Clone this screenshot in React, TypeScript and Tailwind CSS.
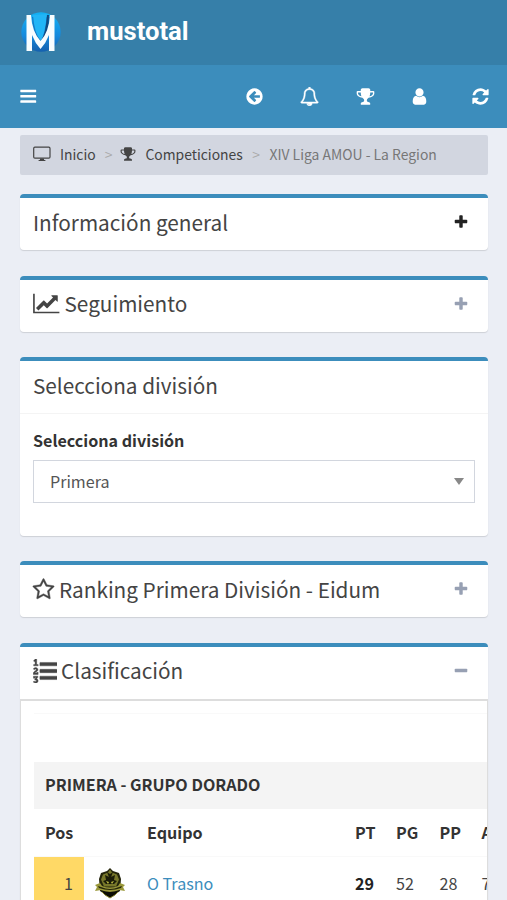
import { useState } from 'react';
import type { ReactNode } from 'react';

const icons = {
  bars: 'M1664 1344v128q0 26-19 45t-45 19h-1408q-26 0-45-19t-19-45v-128q0-26 19-45t45-19h1408q26 0 45 19t19 45zm0-512v128q0 26-19 45t-45 19h-1408q-26 0-45-19t-19-45v-128q0-26 19-45t45-19h1408q26 0 45 19t19 45zm0-512v128q0 26-19 45t-45 19h-1408q-26 0-45-19t-19-45v-128q0-26 19-45t45-19h1408q26 0 45 19t19 45z',
  back: 'M1408 960v-128q0-26-19-45t-45-19h-502l189-189q19-19 19-45t-19-45l-91-91q-18-18-45-18t-45 18l-362 362-91 91q-18 18-18 45t18 45l91 91 362 362q18 18 45 18t45-18l91-91q18-18 18-45t-18-45l-189-189h502q26 0 45-19t19-45zm256-64q0 209-103 385.5t-279.5 279.5-385.5 103-385.5-103-279.5-279.5-103-385.5 103-385.5 279.5-279.5 385.5-103 385.5 103 279.5 279.5 103 385.5z',
  bell: 'M912 1696q0-16-16-16-59 0-101.5-42.5t-42.5-101.5q0-16-16-16t-16 16q0 73 51.5 124.5t124.5 51.5q16 0 16-16zm-666-288h1300q-266-300-266-832 0-51-24-105t-69-103-121.5-80.5-169.5-31.5-169.5 31.5-121.5 80.5-69 103-24 105q0 532-266 832zm1482 0q0 52-38 90t-90 38h-448q0 106-75 181t-181 75-181-75-75-181h-448q-52 0-90-38t-38-90q50-42 91-88t85-119.5 74.5-158.5 50-206 19.5-260q0-152 117-282.5t307-158.5q-8-19-8-39 0-40 28-68t68-28 68 28 28 68q0 20-8 39 190 28 307 158.5t117 282.5q0 139 19.5 260t50 206 74.5 158.5 85 119.5 91 88z',
  trophy: 'M522 883q-74-162-74-371h-256v96q0 78 94.5 162t235.5 113zm1078-275v-96h-256q0 209-74 371 141-29 235.5-113t94.5-162zm128-128v128q0 71-41.5 143t-112 130-173 97.5-215.5 44.5q-42 54-95 95-38 34-52.5 72.5t-14.5 89.5q0 54 30.5 91t97.5 37q75 0 133.5 45.5t58.5 114.5v64q0 14-9 23t-23 9h-832q-14 0-23-9t-9-23v-64q0-69 58.5-114.5t133.5-45.5q67 0 97.5-37t30.5-91q0-51-14.5-89.5t-52.5-72.5q-53-41-95-95-113-5-215.5-44.5t-173-97.5-112-130-41.5-143v-128q0-40 28-68t68-28h288v-96q0-66 47-113t113-47h576q66 0 113 47t47 113v96h288q40 0 68 28t28 68z',
  user: 'M1536 1399q0 109-62.5 187t-150.5 78h-854q-88 0-150.5-78t-62.5-187q0-85 8.5-160.5t31.5-152 58.5-131 94-89 134.5-34.5q131 128 313 128t313-128q76 0 134.5 34.5t94 89 58.5 131 31.5 152 8.5 160.5zm-256-887q0 159-112.5 271.5t-271.5 112.5-271.5-112.5-112.5-271.5 112.5-271.5 271.5-112.5 271.5 112.5 112.5 271.5z',
  refresh: 'M1639 1056q0 5-1 7-64 268-268 434.5t-478 166.5q-146 0-282.5-55t-243.5-157l-129 129q-19 19-45 19t-45-19-19-45v-448q0-26 19-45t45-19h448q26 0 45 19t19 45-19 45l-137 137q71 66 161 102t187 36q134 0 250-65t186-179q11-17 53-117 8-23 30-23h192q13 0 22.5 9.5t9.5 22.5zm25-800v448q0 26-19 45t-45 19h-448q-26 0-45-19t-19-45 19-45l138-138q-148-137-349-137-134 0-250 65t-186 179q-11 17-53 117-8 23-30 23h-199q-13 0-22.5-9.5t-9.5-22.5v-7q65-268 270-434.5t480-166.5q146 0 284 55.5t245 156.5l130-129q19-19 45-19t45 19 19 45z',
  chart: 'M2048 1536v128h-2048v-1536h128v1408h1920zm-128-1248v435q0 21-19.5 29.5t-35.5-7.5l-121-121-633 633q-10 10-23 10t-23-10l-233-233-416 416-192-192 585-585q10-10 23-10t23 10l233 233 464-464-121-121q-16-16-7.5-35.5t29.5-19.5h435q14 0 23 9t9 23z',
  star: 'M1201 1004l306-297-422-62-189-382-189 382-422 62 306 297-73 421 378-199 377 199zm527-357q0 22-26 48l-363 354 86 500q1 7 1 20 0 50-41 50-19 0-40-12l-449-236-449 236q-22 12-40 12-21 0-31.5-14.5t-10.5-35.5q0-6 2-20l86-500-364-354q-25-27-25-48 0-37 56-46l502-73 225-455q19-41 49-41t49 41l225 455 502 73q56 9 56 46z',
  list: 'M381 1620q0 80-54.5 126t-135.5 46q-106 0-172-66l57-88q49 45 106 45 29 0 50.5-14.5t21.5-42.5q0-64-105-56l-26-56q8-10 32.5-43.5t42.5-54 37-38.5v-1q-16 0-48.5 1t-48.5 1v53h-106v-152h333v88l-95 115q51 12 81 49t30 88zm2-627v159h-362q-6-36-6-54 0-51 23.5-93t56.5-68 66-47.5 56.5-43.5 23.5-45q0-25-14.5-38.5t-39.5-13.5q-46 0-81 58l-85-59q24-51 71.5-79.5t105.5-28.5q73 0 123 41.5t50 112.5q0 50-34 91.5t-75 64.5-75.5 50.5-35.5 52.5h127v-60h105zm1409 319v192q0 13-9.5 22.5t-22.5 9.5h-1216q-13 0-22.5-9.5t-9.5-22.5v-192q0-14 9-23t23-9h1216q13 0 22.5 9.5t9.5 22.5zm-1408-899v99h-335v-99h107q0-41 .5-121.5t.5-121.5v-12h-2q-8 17-50 54l-71-76 136-127h106v404h108zm1408 387v192q0 13-9.5 22.5t-22.5 9.5h-1216q-13 0-22.5-9.5t-9.5-22.5v-192q0-14 9-23t23-9h1216q13 0 22.5 9.5t9.5 22.5zm0-512v192q0 13-9.5 22.5t-22.5 9.5h-1216q-13 0-22.5-9.5t-9.5-22.5v-192q0-13 9.5-22.5t22.5-9.5h1216q13 0 22.5 9.5t9.5 22.5z',
  plus: 'M1600 736v192q0 40-28 68t-68 28h-416v416q0 40-28 68t-68 28h-192q-40 0-68-28t-28-68v-416h-416q-40 0-68-28t-28-68v-192q0-40 28-68t68-28h416v-416q0-40 28-68t68-28h192q40 0 68 28t28 68v416h416q40 0 68 28t28 68z',
  minus: 'M1600 736v192q0 40-28 68t-68 28h-1216q-40 0-68-28t-28-68v-192q0-40 28-68t68-28h1216q40 0 68 28t28 68z',
};

function Icon({ name, box = '0 0 1792 1792', className }: { name: keyof typeof icons; box?: string; className: string }) {
  return (
    <svg viewBox={box} fill="currentColor" className={`shrink-0 ${className}`}>
      <path d={icons[name]} />
    </svg>
  );
}

function Desktop() {
  return (
    <svg viewBox="0 0 18 16" className="h-4 w-[18px] shrink-0" fill="none" stroke="currentColor">
      <rect x="0.7" y="1.2" width="16.3" height="11" rx="1.2" strokeWidth="1.2" />
      <path d="M7.2 12.5h3.6l.4 1.6h1.2v1H5.6v-1h1.2z" fill="currentColor" stroke="none" />
    </svg>
  );
}

function Logo() {
  return (
    <svg viewBox="0 0 42 42" className="w-[42px] h-[42px]">
      <defs>
        <linearGradient id="logo" x1="0" y1="0" x2="0" y2="1">
          <stop offset="0" stopColor="#12b2f5" />
          <stop offset="0.6" stopColor="#1589dc" />
          <stop offset="1" stopColor="#1560ae" />
        </linearGradient>
      </defs>
      <circle cx="21" cy="20" r="19.7" fill="url(#logo)" />
      <path d="M12 5q1 17 9 26q8-9 9-26z" fill="#1578c4" />
      <path d="M13 3q1 18 8 26q4-7 6-27z" fill="#22b5f6" />
      <path d="M21 29q5-8 6-26h2q0 18-8 28z" fill="#104a80" />
      <path d="M6.500 3h4.500q1 17 9.500 26q8.500-9 9.500-26h4.500v36H29V23q-3 8-8.500 14q-5.500-6-8.500-14v16H6.500z" fill="#f8fdff" />
    </svg>
  );
}

function Crest() {
  return (
    <svg viewBox="0 0 32 32" className="w-8 h-8">
      <path d="M16 1l3 3 6 2 2 6-1 12-10 7-10-7-1-12 2-6 6-2z" fill="#24250c" />
      <path d="M16 2.500l2 3 5 2 2 5-3 7H10l-3-7 2-5 5-2z" fill="#77772a" />
      <path d="M11 8l4 2 1 3 1-3 4-2-1 5 3 1-3 3h-8l-3-3 3-1zM13 5l3 2 3-2-3 8z" fill="#1b1c08" />
      <path d="M12 14l3 1-1 2zm8 0l-3 1 1 2z" fill="#c0bd43" />
      <path d="M1 18l5-2 2 3q8 3 16 0l2-3 5 2-2 2 2 4-6-1q-9 4-18 0l-6 1 2-4z" fill="#9a983a" />
      <path d="M4 19l3 1q9 4 18 0l3-1-1 2q-11 4-22 0z" fill="#242509" />
      <path d="M8 24q8 2 16 0l-3 4-5 3-5-3z" fill="#0c0d05" />
      <path d="M8 25l3 3 5 3 5-3 3-3" fill="none" stroke="#93903b" />
    </svg>
  );
}

function Box({ title, icon, tool, dark = false, children }: {
  title: string;
  icon?: ReactNode;
  tool?: 'plus' | 'minus';
  dark?: boolean;
  children?: ReactNode;
}) {
  return (
    <section className="mb-[25.5px] rounded-[4px] border-t-4 border-[#3c8dbc] bg-white shadow-[0_1px_1px_rgba(0,0,0,0.13)]">
      <div className="flex h-[52px] items-center pb-[4px] pl-[13px] pr-[19px] text-[#444]">
        {icon}
        <h3 className="-mt-px grow whitespace-nowrap text-[20.75px] leading-[26px]">{title}</h3>
        {tool && (
          <button className={dark ? 'text-[#222]' : 'text-[#97a0b3]'}>
            <Icon name={tool} className="h-4 w-4" />
          </button>
        )}
      </div>
      {children}
    </section>
  );
}

const columns = 'grid w-[500px] grid-cols-[50px_52.5px_208px_41px_43.5px_42px_63px]';

const teams = [{ pos: 1, name: 'O Trasno', pt: 29, pg: 52, pp: 28, next: 76 }];

function App() {
  const [division] = useState('Primera');

  return (
    <div className="h-[900px] overflow-hidden bg-[#ebeef5] font-['Noto_Sans_CJK_SC',sans-serif] text-[16.1px] text-[#333]">
      {/* Brand */}
      <div className="flex h-[65px] items-center bg-[#367fa9] pl-5 text-white">
        <Logo />
        <span className="-mt-[1px] ml-[25px] font-['Roboto',sans-serif] text-[25.6px] font-bold leading-none">mustotal</span>
      </div>

      {/* Navbar */}
      <nav className="flex h-[63px] items-center bg-[#3c8dbc] pl-[18.5px] pr-[17.5px] text-white">
        <Icon name="bars" className="h-[18.5px] w-[18.5px]" />
        <div className="ml-auto flex items-center">
          <Icon name="back" className="h-[19px] w-[19px]" />
          <Icon name="bell" className="ml-[36px] h-[19px] w-[19px] stroke-current stroke-[40]" />
          <Icon name="trophy" className="ml-[37px] h-[19px] w-[19px]" />
          <Icon name="user" className="ml-[35px] h-[19px] w-[19px]" />
          <Icon name="refresh" className="ml-[41.5px] h-[19px] w-[19px]" />
        </div>
      </nav>

      <main className="px-5 pr-[19px] pt-[7px]">
        {/* Breadcrumb */}
        <div className="mb-[19px] flex h-10 items-center whitespace-nowrap rounded-[2px] bg-[#d2d6e0] pb-[2px] pl-[13px] text-[13.9px] text-[#444]">
          <Desktop />
          <span className="ml-[9px]">Inicio</span>
          <span className="ml-[9px] mr-[8px] text-[#aaa]">&gt;</span>
          <Icon name="trophy" className="h-4 w-4" />
          <span className="ml-[9px]">Competiciones</span>
          <span className="ml-[9.5px] mr-[9.5px] text-[#aaa]">&gt;</span>
          <span className="text-[#777]">XIV Liga AMOU - La Region</span>
        </div>

        <Box title="Información general" tool="plus" dark />
        <Box title="Seguimiento" tool="plus" icon={<Icon name="chart" box="0 0 2048 1792" className="mr-[5px] h-[23px] w-[26.5px]" />} />

        <Box title="Selecciona división">
          <div className="h-[122.5px] border-t border-[#f4f4f4] px-[13px] pt-[12.5px]">
            <label className="block font-bold leading-[26px]">Selecciona división</label>
            <div className="mt-[7px] flex h-[43px] items-center border-[1.5px] border-[#d2d6de] pl-[16px] pr-[10px] text-[#555]">
              <span className="grow">{division}</span>
              <span className="border-x-[5.5px] border-t-[7px] border-x-transparent border-t-[#888]" />
            </div>
          </div>
        </Box>

        <Box title="Ranking Primera División - Eidum" tool="plus" icon={<Icon name="star" className="-ml-px mr-[4px] h-[23px] w-[23px] stroke-current stroke-[30]" />} />

        <Box title="Clasificación" tool="minus" icon={<Icon name="list" className="mr-[4px] h-[24px] w-[24px] stroke-current stroke-[30]" />}>
          <div className="h-[260px] overflow-hidden border-x border-t-2 border-[#ddd] pl-[13px] pt-[12px]">
            <div className="h-[49px] border-t border-[#f9f9f9]" />
            <div className="flex h-[47px] items-center bg-[#f4f4f4] pb-px pl-[11px] font-bold">PRIMERA - GRUPO DORADO</div>
            <div className={`${columns} h-[47px] items-center font-bold`}>
              <span className="pl-[11px]">Pos</span>
              <span />
              <span className="pl-[10.5px]">Equipo</span>
              <span className="pl-[10.5px]">PT</span>
              <span className="pl-[10.5px]">PG</span>
              <span className="pl-[10.5px]">PP</span>
              <span className="pl-[10.5px]">AVG</span>
            </div>
            {teams.map((team) => (
              <div key={team.pos} className={`${columns} h-[54px] items-center border-t border-[#f9f9f9] text-[#444]`}>
                <span className="flex h-full items-center justify-end bg-[#ffd966] pr-[11px]">{team.pos}</span>
                <span className="pl-[10px]"><Crest /></span>
                <a className="pl-[10.5px] text-[#3c8dbc]">{team.name}</a>
                <span className="pl-[10.5px] font-bold text-[#222]">{team.pt}</span>
                <span className="pl-[10.5px]">{team.pg}</span>
                <span className="pl-[10.5px]">{team.pp}</span>
                <span className="pl-[10.5px]">{team.next}</span>
              </div>
            ))}
          </div>
        </Box>
      </main>
    </div>
  );
}

export default App;
